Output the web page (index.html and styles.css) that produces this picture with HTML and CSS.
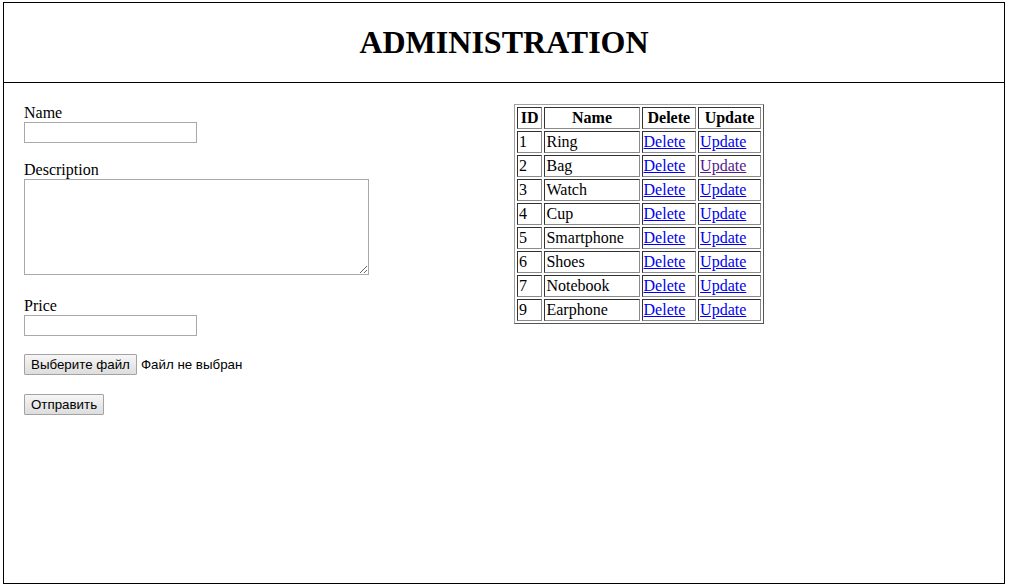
FILE: index.html
```html
<!DOCTYPE html>
<html>
<head>
<meta charset="utf-8">
<title>Administration</title>
<link rel="stylesheet" href="styles.css">
</head>
<body>
<div class="page">
  <header class="header">
    <h1 class="title">ADMINISTRATION</h1>
  </header>
  <main class="content">
    <form class="form">
      <label class="label">Name</label>
      <input class="text-input" type="text">
      <label class="label gap">Description</label>
      <textarea class="textarea"></textarea>
      <label class="label gap-lg">Price</label>
      <input class="text-input" type="text">
      <div class="file-row">
        <span class="btn">Выберите файл</span><span class="file-note">Файл не выбран</span>
      </div>
      <div class="submit-row">
        <span class="btn">Отправить</span>
      </div>
    </form>
    <table class="items">
      <thead>
        <tr><th>ID</th><th>Name</th><th>Delete</th><th>Update</th></tr>
      </thead>
      <tbody>
        <tr><td>1</td><td>Ring</td><td><a href="#d1">Delete</a></td><td><a href="#u1">Update</a></td></tr>
        <tr><td>2</td><td>Bag</td><td><a href="#d2">Delete</a></td><td><a class="visited" href="#u2">Update</a></td></tr>
        <tr><td>3</td><td>Watch</td><td><a href="#d3">Delete</a></td><td><a href="#u3">Update</a></td></tr>
        <tr><td>4</td><td>Cup</td><td><a href="#d4">Delete</a></td><td><a href="#u4">Update</a></td></tr>
        <tr><td>5</td><td>Smartphone</td><td><a href="#d5">Delete</a></td><td><a href="#u5">Update</a></td></tr>
        <tr><td>6</td><td>Shoes</td><td><a href="#d6">Delete</a></td><td><a href="#u6">Update</a></td></tr>
        <tr><td>7</td><td>Notebook</td><td><a href="#d7">Delete</a></td><td><a href="#u7">Update</a></td></tr>
        <tr><td>9</td><td>Earphone</td><td><a href="#d9">Delete</a></td><td><a href="#u9">Update</a></td></tr>
      </tbody>
    </table>
  </main>
</div>
</body>
</html>
```
FILE: styles.css
```css
html, body {
  margin: 0;
  padding: 0;
  background: #fff;
}
body {
  font-family: "Liberation Serif", "Times New Roman", serif;
  font-size: 16px;
  color: #000;
}
.page {
  box-sizing: border-box;
  width: 1002px;
  height: 582px;
  margin: 2px 0 0 3px;
  border: 1px solid #000;
  display: flex;
  flex-direction: column;
}
.header {
  border-bottom: 1px solid #000;
  height: 79px;
  display: flex;
  justify-content: center;
}
.title {
  margin: 21px 0 0;
  font-size: 32px;
  font-weight: bold;
  line-height: 37px;
}
.content {
  display: flex;
  align-items: flex-start;
  padding: 21px 20px 0;
}
.form {
  flex: 0 0 490px;
  display: flex;
  flex-direction: column;
  align-items: flex-start;
}
.label {
  display: block;
  line-height: 18px;
  height: 18px;
}
.label.gap { margin-top: 18px; }
.label.gap-lg { margin-top: 22px; }
.text-input {
  box-sizing: border-box;
  width: 173px;
  height: 21px;
  margin: 0;
  border: 1px solid #a9a9a9;
  padding: 1px 2px;
  font: 13.33px "Liberation Sans", Arial, sans-serif;
}
.textarea {
  box-sizing: border-box;
  width: 345px;
  height: 96px;
  margin: 0;
  border: 1px solid #a9a9a9;
  padding: 2px;
  font: 13.33px "Liberation Mono", monospace;
}
.file-row {
  margin-top: 18px;
  display: flex;
  align-items: center;
  font: 13.33px "Liberation Sans", Arial, sans-serif;
}
.submit-row {
  margin-top: 19px;
  display: flex;
  font: 13.33px "Liberation Sans", Arial, sans-serif;
}
.btn {
  box-sizing: border-box;
  display: inline-flex;
  align-items: center;
  height: 21px;
  padding: 0 6px;
  border: 1px solid #a3a3a3;
  border-radius: 1px;
  background: linear-gradient(#f6f6f6, #dddddd);
  color: #000;
  font: 13.33px "Liberation Sans", Arial, sans-serif;
}
.file-note {
  margin-left: 4px;
}
.items {
  width: 250px;
  border: 1px solid;
  border-color: #a0a0a0 #555 #555 #a0a0a0;
  border-spacing: 2px;
  font-size: 16px;
}
.items th, .items td {
  border: 1px solid;
  border-color: #333 #8a8a8a #8a8a8a #333;
  padding: 1px;
  line-height: 18px;
  text-align: left;
}
.items th {
  text-align: center;
  font-weight: bold;
}
.items a {
  color: #0000ee;
  text-decoration: underline;
}
.items a.visited {
  color: #551a8b;
}
```
